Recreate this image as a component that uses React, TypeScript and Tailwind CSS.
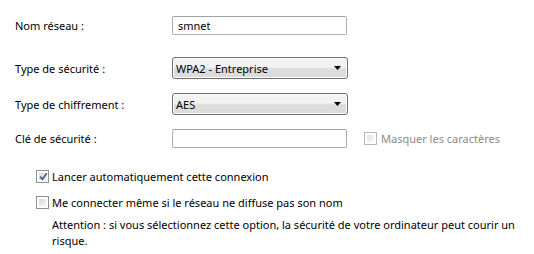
import React from 'react'

const font = { fontFamily: '"Noto Sans", "Open Sans", sans-serif' }

function Arrow() {
  return (
    <svg width="7" height="4" viewBox="0 0 7 4" className="block">
      <path d="M0 0 H7 L3.5 4 Z" fill="#000" />
    </svg>
  )
}

function Select({ value }: { value: string }) {
  return (
    <div className="w-[176px] h-[22px] flex items-center justify-between pl-[3px] pr-[6px] border border-[#707070] rounded-[3px] bg-gradient-to-b from-[#f2f2f2] from-45% to-[#dcdcdc] to-55% shadow-[inset_0_0_0_1px_#fcfcfc]">
      <span className="text-[11px] leading-none text-black">{value}</span>
      <Arrow />
    </div>
  )
}

function TextBox({ value }: { value?: string }) {
  return (
    <div className="w-[175px] h-[19px] flex items-center px-[5px] border border-[#abadb3] border-t-[#a0a0a0] rounded-[2px] bg-white">
      <span className="text-[11px] leading-none text-black">{value}</span>
    </div>
  )
}

function CheckBox({ checked, disabled }: { checked?: boolean; disabled?: boolean }) {
  return (
    <div
      className={`w-[13px] h-[13px] border ${disabled ? 'border-[#b8b8b8]' : 'border-[#8e8f8f]'} bg-white p-[2px] shrink-0`}
    >
      <div
        className={`w-full h-full relative ${disabled ? 'bg-gradient-to-br from-[#e6e6e6] to-[#f6f6f6]' : 'bg-gradient-to-br from-[#d8d8d8] to-[#f4f4f4]'}`}
      >
        {checked && (
          <svg width="9" height="9" viewBox="0 0 9 9" className="absolute -left-[0px] -top-[1px]">
            <path d="M1.2 4.6 L3.4 7.2 L7.8 1.2" stroke="#4a5f97" strokeWidth="1.8" fill="none" />
          </svg>
        )}
      </div>
    </div>
  )
}

function Row({ label, children, className }: { label: string; children: React.ReactNode; className?: string }) {
  return (
    <div className={`flex items-center ${className ?? ''}`}>
      <div className="w-[157px] text-[11px] text-black leading-none">{label}</div>
      {children}
    </div>
  )
}

export default function App() {
  return (
    <div className="w-[534px] h-[254px] bg-white pl-[15px] pt-[16px]" style={font}>
      <Row label="Nom réseau :" className="h-[19px]">
        <TextBox value="smnet" />
      </Row>
      <Row label="Type de sécurité :" className="h-[22px] mt-[22px]">
        <Select value="WPA2 - Entreprise" />
      </Row>
      <Row label="Type de chiffrement :" className="h-[22px] mt-[14px]">
        <Select value="AES" />
      </Row>
      <Row label="Clé de sécurité :" className="h-[19px] mt-[14px]">
        <TextBox />
        <div className="flex items-center gap-[4px] ml-[17px]">
          <CheckBox disabled />
          <span className="text-[11px] leading-none text-[#8a8a8a]">Masquer les caractères</span>
        </div>
      </Row>

      <div className="pl-[21px] mt-[21px] text-[11px] text-black">
        <div className="flex items-center gap-[3px] h-[15px]">
          <CheckBox checked />
          <span className="leading-none">Lancer automatiquement cette connexion</span>
        </div>
        <div className="flex items-center gap-[3px] h-[15px] mt-[11px]">
          <CheckBox />
          <span className="leading-none">Me connecter même si le réseau ne diffuse pas son nom</span>
        </div>
        <p className="pl-[16px] mt-[7px] leading-[16px] w-[500px]">
          Attention : si vous sélectionnez cette option, la sécurité de votre ordinateur peut courir un risque.
        </p>
      </div>
    </div>
  )
}
